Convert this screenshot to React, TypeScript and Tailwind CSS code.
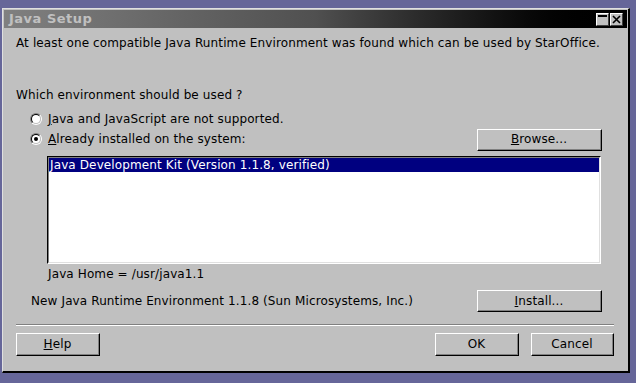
const font = { fontFamily: '"DejaVu Sans", "Liberation Sans", sans-serif' };

function Raised({ children, className }: { children: React.ReactNode; className?: string }) {
  return (
    <div
      className={
        "flex items-center justify-center border border-t-white border-l-white border-r-black border-b-black bg-[#c0c0c0] text-[12px] text-black " +
        (className ?? "")
      }
    >
      <div className="flex h-full w-full items-center justify-center border-r border-b border-r-[#808080] border-b-[#808080]">
        {children}
      </div>
    </div>
  );
}

function Radio({ checked }: { checked?: boolean }) {
  return (
    <div className="flex h-[12px] w-[12px] items-center justify-center rounded-full border border-t-[#808080] border-l-[#808080] border-r-white border-b-white">
      <div className="flex h-[10px] w-[10px] items-center justify-center rounded-full border border-t-black border-l-black border-r-[#c0c0c0] border-b-[#c0c0c0] bg-white">
        {checked && <div className="h-[4px] w-[4px] rounded-full bg-black" />}
      </div>
    </div>
  );
}

export default function App() {
  return (
    <div className="h-[383px] w-[636px] overflow-hidden bg-[#666699] pt-[8px] pl-[2px]" style={font}>
      <div className="flex h-[365px] w-[628px] flex-col border-t border-l border-t-[#e0e0e0] border-l-[#e0e0e0] border-r-2 border-b-2 border-r-black border-b-black bg-[#c0c0c0]">
        {/* title bar */}
        <div className="mx-[1px] mt-[1px] flex h-[18px] items-center justify-between bg-gradient-to-r from-[#808080] via-[#505050] to-[#000000] pl-[5px] pr-[4px]">
          <span className="text-[13px] font-bold tracking-[0.5px] text-[#c0c0c0]">Java Setup</span>
          <div className="flex gap-[1px]">
            <div className="flex h-[13px] w-[13px] items-start justify-center border border-t-white border-l-white border-r-[#404040] border-b-[#404040] bg-[#c0c0c0] pt-[1px]">
              <div className="h-[2px] w-[9px] bg-black" />
            </div>
            <div className="flex h-[13px] w-[13px] items-center justify-center border border-t-white border-l-white border-r-[#404040] border-b-[#404040] bg-[#c0c0c0]">
              <svg width="9" height="9" viewBox="0 0 9 9">
                <path d="M1 1 L8 8 M8 1 L1 8" stroke="black" strokeWidth="1.6" />
              </svg>
            </div>
          </div>
        </div>

        <div className="flex flex-1 flex-col pl-[13px] pr-[14px] text-[12px] tracking-[0.12px] text-black">
          <div className="mt-[7px] h-[16px] leading-[16px]">
            At least one compatible Java Runtime Environment was found which can be used by StarOffice.
          </div>
          <div className="mt-[36px] h-[16px] leading-[16px]">Which environment should be used ?</div>
          <div className="mt-[6px] flex h-[20px] items-center gap-[6px] pl-[14px]">
            <Radio />
            <span>
              <span className="underline">J</span>ava and JavaScript are not supported.
            </span>
          </div>
          <div className="flex h-[20px] items-center justify-between pl-[14px] pr-[12px]">
            <div className="flex items-center gap-[6px]">
              <Radio checked />
              <span>
                <span className="underline">A</span>lready installed on the system:
              </span>
            </div>
            <Raised className="mt-[1px] h-[22px] w-[125px]">
              <span>
                <span className="underline">B</span>rowse...
              </span>
            </Raised>
          </div>
          <div className="mt-[7px] ml-[31px] h-[108px] w-[554px] border border-t-black border-l-black border-r-white border-b-white bg-white">
            <div className="h-[106px] border border-t-[#808080] border-l-[#808080] border-r-[#e0e0e0] border-b-[#e0e0e0]">
              <div className="h-[14px] bg-[#000080] pl-[1px] leading-[14px] text-white">
                Java Development Kit (Version 1.1.8, verified)
              </div>
            </div>
          </div>
          <div className="mt-[2px] h-[16px] pl-[32px] leading-[16px]">Java Home = /usr/java1.1</div>
          <div className="mt-[8px] flex items-center justify-between pl-[15px] pr-[12px]">
            <span>New Java Runtime Environment 1.1.8 (Sun Microsystems, Inc.)</span>
            <Raised className="h-[22px] w-[125px]">
              <span>
                <span className="underline">I</span>nstall...
              </span>
            </Raised>
          </div>
          <div className="mt-[12px] h-[2px] border-t border-b border-t-[#808080] border-b-white" />
          <div className="mt-[7px] flex items-center justify-between">
            <Raised className="h-[23px] w-[84px]">
              <span>
                <span className="underline">H</span>elp
              </span>
            </Raised>
            <div className="flex gap-[12px]">
              <Raised className="h-[23px] w-[84px]">OK</Raised>
              <Raised className="h-[23px] w-[83px]">Cancel</Raised>
            </div>
          </div>
        </div>
      </div>
    </div>
  );
}
